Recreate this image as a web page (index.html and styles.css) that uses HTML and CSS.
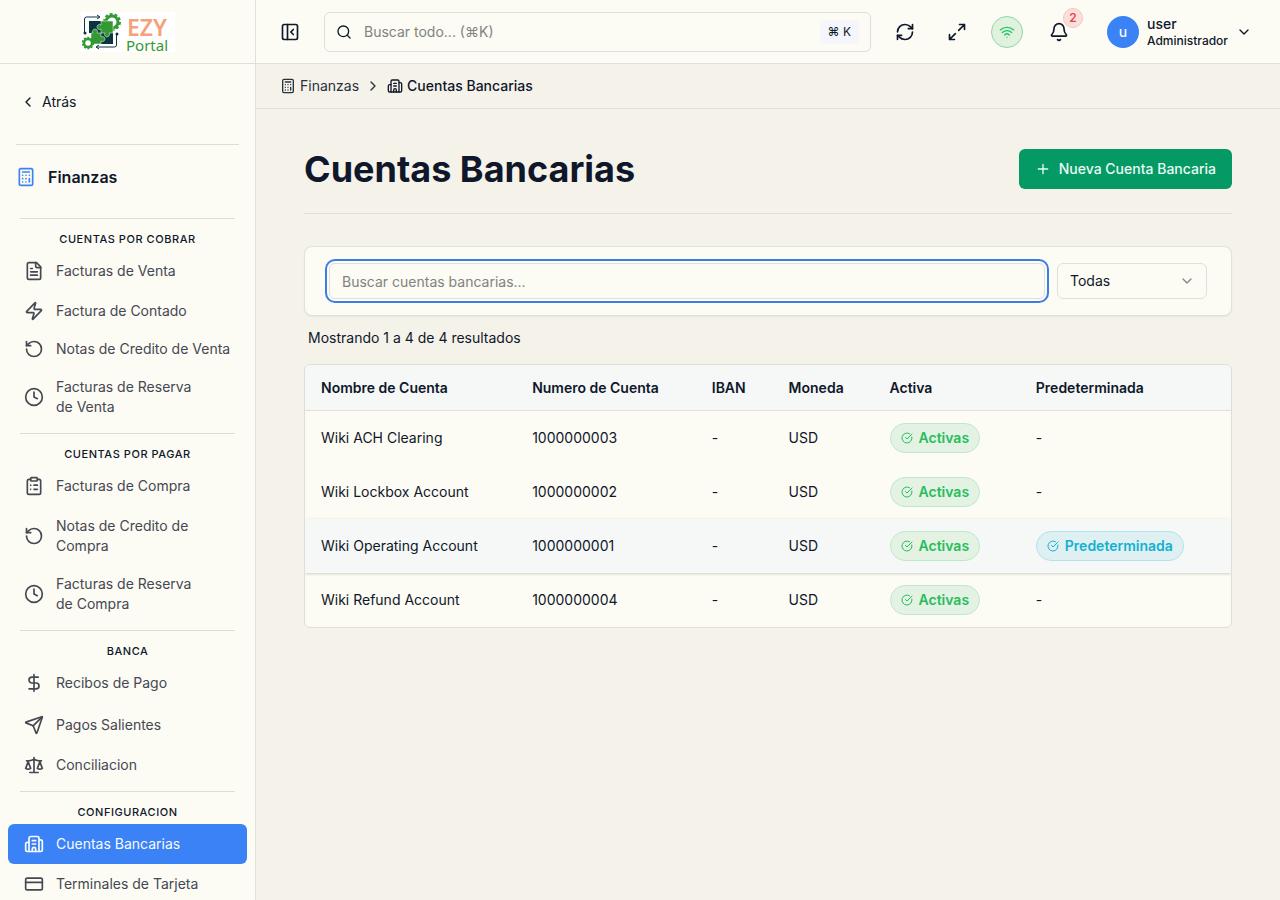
FILE: index.html
```html
<!DOCTYPE html>
<html lang="es">
<head>
    <meta charset="UTF-8">
    <meta name="viewport" content="width=device-width, initial-scale=1.0">
    <title>Cuentas Bancarias - EZY Portal</title>
    <link rel="stylesheet" href="styles.css">
</head>
<body>
    <svg class="sprite" aria-hidden="true">
        <symbol id="i-calculator" viewBox="0 0 24 24"><rect width="16" height="20" x="4" y="2" rx="2"/><path d="M8 6h8M16 14v4M16 10h.01M12 10h.01M8 10h.01M12 14h.01M8 14h.01M12 18h.01M8 18h.01"/></symbol>
        <symbol id="i-building" viewBox="0 0 24 24"><path d="M10 12h4M10 8h4M14 21v-3a2 2 0 0 0-4 0v3"/><path d="M6 10H4a2 2 0 0 0-2 2v7a2 2 0 0 0 2 2h16a2 2 0 0 0 2-2V9a2 2 0 0 0-2-2h-2"/><path d="M6 21V5a2 2 0 0 1 2-2h8a2 2 0 0 1 2 2v16"/></symbol>
        <symbol id="i-file" viewBox="0 0 24 24"><path d="M15 2H6a2 2 0 0 0-2 2v16a2 2 0 0 0 2 2h12a2 2 0 0 0 2-2V7Z"/><path d="M14 2v4a2 2 0 0 0 2 2h4M10 9H8M16 13H8M16 17H8"/></symbol>
        <symbol id="i-zap" viewBox="0 0 24 24"><path d="M4 14a1 1 0 0 1-.78-1.63l9.9-10.2a.5.5 0 0 1 .86.46l-1.92 6.02A1 1 0 0 0 13 10h7a1 1 0 0 1 .78 1.63l-9.9 10.2a.5.5 0 0 1-.86-.46l1.92-6.02A1 1 0 0 0 11 14z"/></symbol>
        <symbol id="i-rotate" viewBox="0 0 24 24"><path d="M3 12a9 9 0 1 0 9-9 9.75 9.75 0 0 0-6.74 2.74L3 8"/><path d="M3 3v5h5"/></symbol>
        <symbol id="i-clock" viewBox="0 0 24 24"><circle cx="12" cy="12" r="10"/><path d="M12 6v6l4 2"/></symbol>
        <symbol id="i-clipboard" viewBox="0 0 24 24"><rect width="8" height="4" x="8" y="2" rx="1"/><path d="M16 4h2a2 2 0 0 1 2 2v14a2 2 0 0 1-2 2H6a2 2 0 0 1-2-2V6a2 2 0 0 1 2-2h2M12 11h4M12 16h4M8 11h.01M8 16h.01"/></symbol>
        <symbol id="i-dollar" viewBox="0 0 24 24"><path d="M12 2v20M17 5H9.5a3.5 3.5 0 0 0 0 7h5a3.5 3.5 0 0 1 0 7H6"/></symbol>
        <symbol id="i-send" viewBox="0 0 24 24"><path d="M14.536 21.686a.5.5 0 0 0 .937-.024l6.5-19a.496.496 0 0 0-.635-.635l-19 6.5a.5.5 0 0 0-.024.937l7.93 3.18a2 2 0 0 1 1.112 1.11z"/><path d="m21.854 2.147-10.94 10.939"/></symbol>
        <symbol id="i-scale" viewBox="0 0 24 24"><path d="m16 16 3-8 3 8c-.87.65-1.92 1-3 1s-2.13-.35-3-1ZM2 16l3-8 3 8c-.87.65-1.92 1-3 1s-2.13-.35-3-1ZM7 21h10M12 3v18M3 7h2c2 0 5-1 7-2 2 1 5 2 7 2h2"/></symbol>
        <symbol id="i-card" viewBox="0 0 24 24"><rect width="20" height="14" x="2" y="5" rx="2"/><path d="M2 10h20"/></symbol>
        <symbol id="i-left" viewBox="0 0 24 24"><path d="m15 18-6-6 6-6"/></symbol>
        <symbol id="i-right" viewBox="0 0 24 24"><path d="m9 18 6-6-6-6"/></symbol>
        <symbol id="i-down" viewBox="0 0 24 24"><path d="m6 9 6 6 6-6"/></symbol>
        <symbol id="i-panel" viewBox="0 0 24 24"><rect width="18" height="18" x="3" y="3" rx="2"/><path d="M9 3v18M16 15l-3-3 3-3"/></symbol>
        <symbol id="i-search" viewBox="0 0 24 24"><circle cx="11" cy="11" r="8"/><path d="m21 21-4.3-4.3"/></symbol>
        <symbol id="i-refresh" viewBox="0 0 24 24"><path d="M3 12a9 9 0 0 1 9-9 9.75 9.75 0 0 1 6.74 2.74L21 8"/><path d="M21 3v5h-5M21 12a9 9 0 0 1-9 9 9.75 9.75 0 0 1-6.74-2.74L3 16"/><path d="M8 16H3v5"/></symbol>
        <symbol id="i-expand" viewBox="0 0 24 24"><path d="M15 3h6v6M21 3l-7 7M3 21l7-7M9 21H3v-6"/></symbol>
        <symbol id="i-wifi" viewBox="0 0 24 24"><path d="M12 20h.01M2 8.82a15 15 0 0 1 20 0M5 12.859a10 10 0 0 1 14 0M8.5 16.429a5 5 0 0 1 7 0"/></symbol>
        <symbol id="i-bell" viewBox="0 0 24 24"><path d="M10.268 21a2 2 0 0 0 3.464 0M3.262 15.326A1 1 0 0 0 4 17h16a1 1 0 0 0 .74-1.673C19.41 13.956 18 12.499 18 8A6 6 0 0 0 6 8c0 4.499-1.411 5.956-2.738 7.326"/></symbol>
        <symbol id="i-plus" viewBox="0 0 24 24"><path d="M5 12h14M12 5v14"/></symbol>
        <symbol id="i-check" viewBox="0 0 24 24"><path d="M21.801 10A10 10 0 1 1 17 3.335"/><path d="m9 11 3 3L22 4"/></symbol>
    </svg>

    <div class="app">
        <aside class="sidebar">
            <div class="brand">
                <svg class="logo" viewBox="0 0 94 40" role="img" aria-label="EZY Portal">
                    <rect width="94" height="40" fill="#fff"/>
                    <circle cx="31" cy="10" r="6" fill="none" stroke="#339933" stroke-width="3"/>
                    <circle cx="31" cy="10" r="8" fill="none" stroke="#339933" stroke-width="2" stroke-dasharray="3 2"/>
                    <path fill="#0b3440" d="M8 9h12v12H8zM20 21h12v11H20z"/>
                    <path fill="#339933" stroke="#fff" stroke-width=".5" d="M20 9h12v12h-4a2.5 2.5 0 1 1-4 0h-4v-4a2.5 2.5 0 1 1 0-4z"/>
                    <path fill="#339933" stroke="#fff" stroke-width=".5" d="M10 21h2a2.500 2.500 0 1 1 4 0h4v4a2.500 2.500 0 1 1 0 4v3H10z"/>
                    <path fill="none" stroke="#0b3440" d="M3.500 20V7q0-2 2-2H18M16 3l3 2-3 2M35.500 23v10q0 2-2 2H16M18 33l-3 2 3 2"/>
                    <circle cx="4" cy="21" r="1.500" fill="#0b3440"/>
                    <circle cx="36" cy="22" r="1.500" fill="#0b3440"/>
                    <circle cx="7" cy="31" r="4" fill="#fff" stroke="#339933" stroke-width="2.500"/>
                    <circle cx="7" cy="31" r="5.500" fill="none" stroke="#339933" stroke-width="1.500" stroke-dasharray="2 1.500"/>
                    <text class="logo-top" x="46" y="24">EZY</text>
                    <text class="logo-bottom" x="45" y="39">Portal</text>
                </svg>
            </div>
            <a class="back" href="#"><svg class="icon icon-16"><use href="#i-left"/></svg>Atrás</a>
            <div class="module">
                <svg class="icon icon-20"><use href="#i-calculator"/></svg>
                <span>Finanzas</span>
            </div>
            <nav class="nav">
                <section class="nav-group">
                    <h2>Cuentas por Cobrar</h2>
                    <a class="nav-item tall" href="#"><svg class="icon icon-20"><use href="#i-file"/></svg><span>Facturas de Venta</span></a>
                    <a class="nav-item" href="#"><svg class="icon icon-20"><use href="#i-zap"/></svg><span>Factura de Contado</span></a>
                    <a class="nav-item" href="#"><svg class="icon icon-20"><use href="#i-rotate"/></svg><span>Notas de Credito de Venta</span></a>
                    <a class="nav-item" href="#"><svg class="icon icon-20"><use href="#i-clock"/></svg><span>Facturas de Reserva<br>de Venta</span></a>
                </section>
                <section class="nav-group">
                    <h2>Cuentas por Pagar</h2>
                    <a class="nav-item tall" href="#"><svg class="icon icon-20"><use href="#i-clipboard"/></svg><span>Facturas de Compra</span></a>
                    <a class="nav-item" href="#"><svg class="icon icon-20"><use href="#i-rotate"/></svg><span>Notas de Credito de<br>Compra</span></a>
                    <a class="nav-item" href="#"><svg class="icon icon-20"><use href="#i-clock"/></svg><span>Facturas de Reserva<br>de Compra</span></a>
                </section>
                <section class="nav-group">
                    <h2>Banca</h2>
                    <a class="nav-item tall" href="#"><svg class="icon icon-20"><use href="#i-dollar"/></svg><span>Recibos de Pago</span></a>
                    <a class="nav-item tall" href="#"><svg class="icon icon-20"><use href="#i-send"/></svg><span>Pagos Salientes</span></a>
                    <a class="nav-item" href="#"><svg class="icon icon-20"><use href="#i-scale"/></svg><span>Conciliacion</span></a>
                </section>
                <section class="nav-group">
                    <h2>Configuracion</h2>
                    <a class="nav-item tall active" href="#"><svg class="icon icon-20"><use href="#i-building"/></svg><span>Cuentas Bancarias</span></a>
                    <a class="nav-item" href="#"><svg class="icon icon-20"><use href="#i-card"/></svg><span>Terminales de Tarjeta</span></a>
                </section>
            </nav>
        </aside>

        <div class="main">
            <header class="topbar">
                <button class="icon-btn" type="button" aria-label="Contraer menú"><svg class="icon icon-20"><use href="#i-panel"/></svg></button>
                <div class="search">
                    <svg class="icon icon-16"><use href="#i-search"/></svg>
                    <input type="text" placeholder="Buscar todo... (⌘K)" aria-label="Buscar todo">
                    <kbd>⌘ K</kbd>
                </div>
                <button class="icon-btn" type="button" aria-label="Actualizar"><svg class="icon icon-20"><use href="#i-refresh"/></svg></button>
                <button class="icon-btn" type="button" aria-label="Pantalla completa"><svg class="icon icon-20"><use href="#i-expand"/></svg></button>
                <button class="wifi-btn" type="button" aria-label="Conectado"><svg class="icon icon-16"><use href="#i-wifi"/></svg></button>
                <button class="icon-btn bell-btn" type="button" aria-label="Notificaciones"><svg class="icon icon-20"><use href="#i-bell"/></svg><span class="count">2</span></button>
                <button class="user" type="button">
                    <span class="avatar">u</span>
                    <span class="user-text"><span class="user-name">user</span><span class="user-role">Administrador</span></span>
                    <svg class="icon icon-16"><use href="#i-down"/></svg>
                </button>
            </header>

            <nav class="breadcrumb" aria-label="Ruta">
                <a href="#"><svg class="icon icon-16"><use href="#i-calculator"/></svg>Finanzas</a>
                <svg class="icon icon-16"><use href="#i-right"/></svg>
                <span class="current"><svg class="icon icon-16"><use href="#i-building"/></svg>Cuentas Bancarias</span>
            </nav>

            <main class="content">
                <div class="page-head">
                    <h1>Cuentas Bancarias</h1>
                    <button class="primary-btn" type="button"><svg class="icon icon-16"><use href="#i-plus"/></svg>Nueva Cuenta Bancaria</button>
                </div>

                <div class="filters">
                    <input class="filter-input" type="text" placeholder="Buscar cuentas bancarias..." aria-label="Buscar cuentas bancarias">
                    <div class="select-wrap">
                        <select aria-label="Estado">
                            <option>Todas</option>
                            <option>Activas</option>
                            <option>Inactivas</option>
                        </select>
                        <svg class="icon icon-16"><use href="#i-down"/></svg>
                    </div>
                </div>

                <p class="results">Mostrando 1 a 4 de 4 resultados</p>

                <div class="table-card">
                    <table>
                        <thead>
                            <tr>
                                <th class="col-name">Nombre de Cuenta</th>
                                <th class="col-number">Numero de Cuenta</th>
                                <th class="col-iban">IBAN</th>
                                <th class="col-currency">Moneda</th>
                                <th class="col-active">Activa</th>
                                <th>Predeterminada</th>
                            </tr>
                        </thead>
                        <tbody>
                            <tr>
                                <td>Wiki ACH Clearing</td>
                                <td>1000000003</td>
                                <td>-</td>
                                <td>USD</td>
                                <td><span class="badge green"><svg class="icon icon-12"><use href="#i-check"/></svg>Activas</span></td>
                                <td>-</td>
                            </tr>
                            <tr>
                                <td>Wiki Lockbox Account</td>
                                <td>1000000002</td>
                                <td>-</td>
                                <td>USD</td>
                                <td><span class="badge green"><svg class="icon icon-12"><use href="#i-check"/></svg>Activas</span></td>
                                <td>-</td>
                            </tr>
                            <tr class="highlight">
                                <td>Wiki Operating Account</td>
                                <td>1000000001</td>
                                <td>-</td>
                                <td>USD</td>
                                <td><span class="badge green"><svg class="icon icon-12"><use href="#i-check"/></svg>Activas</span></td>
                                <td><span class="badge cyan"><svg class="icon icon-12"><use href="#i-check"/></svg>Predeterminada</span></td>
                            </tr>
                            <tr>
                                <td>Wiki Refund Account</td>
                                <td>1000000004</td>
                                <td>-</td>
                                <td>USD</td>
                                <td><span class="badge green"><svg class="icon icon-12"><use href="#i-check"/></svg>Activas</span></td>
                                <td>-</td>
                            </tr>
                        </tbody>
                    </table>
                </div>
            </main>
        </div>
    </div>
</body>
</html>
```

FILE: styles.css
```css
* {
    box-sizing: border-box;
}
body {
    margin: 0;
    font-family: Inter, "Liberation Sans", sans-serif;
    font-size: 14px;
    line-height: 20px;
    color: #0f172a;
    background-color: #f5f2ea;
}
button, input, select, kbd {
    font: inherit;
    color: inherit;
}
button {
    border: none;
    background: none;
    padding: 0;
    cursor: pointer;
}
a {
    color: inherit;
    text-decoration: none;
}
.sprite {
    display: none;
}
.icon {
    flex: none;
    fill: none;
    stroke: currentColor;
    stroke-width: 2;
    stroke-linecap: round;
    stroke-linejoin: round;
}
.icon-12 {
    width: 12px;
    height: 12px;
}
.icon-16 {
    width: 16px;
    height: 16px;
}
.icon-20 {
    width: 20px;
    height: 20px;
}
.app {
    display: flex;
    height: 100vh;
}

/* Menú lateral */
.sidebar {
    flex: none;
    width: 256px;
    overflow: hidden;
    background-color: #fcfbf4;
    border-right: 1px solid #e0dfd9;
}
.brand {
    display: flex;
    justify-content: center;
    align-items: center;
    height: 64px;
    border-bottom: 1px solid #e0dfd9;
}
.logo {
    width: 94px;
    height: 40px;
    overflow: visible;
}
.logo-top {
    font: 600 23px "Noto Sans", sans-serif;
    fill: #f5a27b;
}
.logo-bottom {
    font: 400 15px "Noto Sans", sans-serif;
    fill: #339933;
}
.back {
    display: flex;
    align-items: center;
    gap: 6px;
    height: 81px;
    margin: 0 16px;
    padding: 0 4px 4px;
    border-bottom: 1px solid #dddcd7;
}
.module {
    display: flex;
    align-items: center;
    gap: 12px;
    height: 64px;
    padding: 0 16px;
    font-size: 16px;
    font-weight: 600;
}
.module .icon {
    color: #3b82f6;
}
.nav {
    padding: 9px 8px 0;
}
.nav-group {
    display: flex;
    flex-direction: column;
    gap: 2px;
    padding-bottom: 8px;
}
.nav-group h2 {
    margin: 0 12px;
    padding: 12px 0 2px;
    border-top: 1px solid #dddcd7;
    font-size: 11px;
    line-height: 16px;
    font-weight: 500;
    letter-spacing: 0.05em;
    text-align: center;
    text-transform: uppercase;
}
.nav-item {
    display: flex;
    align-items: center;
    gap: 12px;
    padding: 8px 16px;
    border-radius: 6px;
    color: #454852;
}
.nav-item.tall {
    padding: 10px 16px;
}
.nav-item.active {
    background-color: #3b82f6;
    color: #f8fafc;
}

/* Barra superior */
.main {
    flex: 1;
    min-width: 0;
}
.topbar {
    display: flex;
    align-items: center;
    gap: 16px;
    height: 64px;
    padding: 0 16px;
    background-color: #fcfbf4;
    border-bottom: 1px solid #e0dfd9;
}
.icon-btn {
    display: flex;
    align-items: center;
    justify-content: center;
    flex: none;
    width: 36px;
    height: 36px;
}
.search {
    display: flex;
    align-items: center;
    flex: 1;
    gap: 12px;
    height: 40px;
    padding: 0 11px;
    border: 1px solid #dfdfda;
    border-radius: 6px;
}
.search input {
    flex: 1;
    min-width: 0;
    padding: 0;
    border: none;
    outline: none;
    background: none;
}
.search input::placeholder,
.filter-input::placeholder {
    color: #82837f;
    opacity: 1;
}
.search kbd {
    padding: 2px 8px;
    border-radius: 4px;
    background-color: #f4f6fb;
    font-size: 12px;
}
.wifi-btn {
    display: flex;
    align-items: center;
    justify-content: center;
    width: 32px;
    height: 32px;
    border: 1px solid #8ed9ab;
    border-radius: 50%;
    background-color: #e0f1de;
    color: #22c55e;
}
.bell-btn {
    position: relative;
    width: 40px;
}
.count {
    position: absolute;
    top: -6px;
    right: -4px;
    width: 20px;
    height: 20px;
    border: 1px solid #f7c5c3;
    border-radius: 50%;
    background-color: #fae0dc;
    color: #ef4444;
    font-size: 12px;
    line-height: 18px;
    font-weight: 600;
}
.user {
    display: flex;
    align-items: center;
    gap: 8px;
    padding: 0 12px;
    text-align: left;
}
.avatar {
    width: 32px;
    height: 32px;
    border-radius: 50%;
    background-color: #3b82f6;
    color: #f8fafc;
    line-height: 32px;
    font-weight: 500;
    text-align: center;
}
.user-text {
    display: flex;
    flex-direction: column;
    font-weight: 500;
}
.user-name {
    line-height: 18px;
}
.user-role {
    font-size: 12px;
    line-height: 16px;
}
.breadcrumb {
    display: flex;
    align-items: center;
    gap: 6px;
    height: 45px;
    padding: 0 24px;
    border-bottom: 1px solid #e0dfd9;
    color: #2a3040;
}
.breadcrumb a,
.breadcrumb .current {
    display: flex;
    align-items: center;
    gap: 4px;
}
.breadcrumb .current {
    color: #0f172a;
    font-weight: 500;
}

/* Contenido */
.content {
    padding: 40px 48px;
}
.page-head {
    display: flex;
    align-items: center;
    justify-content: space-between;
    padding-bottom: 24px;
    border-bottom: 1px solid #e0dfd5;
}
h1 {
    margin: 0;
    font-size: 36px;
    line-height: 40px;
    font-weight: 700;
}
.primary-btn {
    display: flex;
    align-items: center;
    gap: 8px;
    height: 40px;
    padding: 0 16px;
    border-radius: 6px;
    background-color: #059966;
    color: #e9fbf3;
    font-weight: 500;
}
.filters {
    display: flex;
    gap: 12px;
    margin-top: 32px;
    padding: 16px 24px;
    border: 1px solid #e2e0d8;
    border-radius: 8px;
    background-color: #fcfbf4;
    box-shadow: 0 1px 2px rgba(0, 0, 0, 0.06);
}
.filter-input {
    flex: 1;
    min-width: 0;
    height: 36px;
    padding: 0 12px;
    border: 1px solid #e0dfd9;
    border-radius: 6px;
    outline: 2px solid #3b7de6;
    outline-offset: 2px;
    background: none;
}
.select-wrap {
    position: relative;
    width: 150px;
}
.select-wrap select {
    width: 100%;
    height: 36px;
    padding: 0 12px;
    border: 1px solid #e0dfd9;
    border-radius: 6px;
    background: none;
    appearance: none;
}
.select-wrap .icon {
    position: absolute;
    top: 10px;
    right: 12px;
    color: #85868a;
    pointer-events: none;
}
.results {
    margin: 12px 4px 16px;
}
.table-card {
    overflow: hidden;
    border: 1px solid #e0dfd5;
    border-radius: 6px;
    background-color: #fcfbf4;
}
table {
    width: 100%;
    border-spacing: 0;
    table-layout: fixed;
}
th, td {
    padding: 12px 16px;
    text-align: left;
}
th {
    height: 46px;
    border-bottom: 1px solid #dfe0d8;
    background-color: #f5f8f7;
    font-weight: 600;
}
td {
    height: 54px;
}
.col-name {
    width: 22.8%;
}
.col-number {
    width: 19.4%;
}
.col-iban {
    width: 8.3%;
}
.col-currency {
    width: 10.9%;
}
.col-active {
    width: 15.8%;
}
.highlight {
    background-color: #f5f8f7;
    box-shadow: 0 1px 3px rgba(0, 0, 0, 0.18);
}
.badge {
    display: inline-flex;
    align-items: center;
    gap: 6px;
    height: 30px;
    padding: 0 10px;
    border: 1px solid;
    border-radius: 15px;
    font-weight: 600;
    vertical-align: top;
}
.green {
    border-color: #bfe8cb;
    background-color: #e3f2e2;
    color: #27bd5c;
}
.cyan {
    border-color: #b3e2ec;
    background-color: #dff0f3;
    color: #12b1d0;
}
```
